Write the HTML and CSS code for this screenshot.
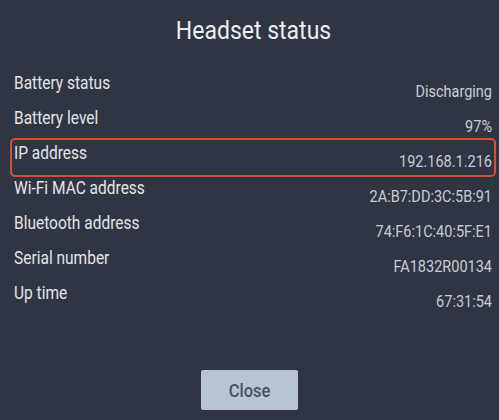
FILE: index.html
```html
<!DOCTYPE html>
<html lang="en">
<head>
<meta charset="utf-8">
<title>Headset status</title>
<link rel="stylesheet" href="styles.css">
</head>
<body>
<main class="dialog">
  <h1 class="title"><span class="stretch">Headset status</span></h1>
  <div class="list">
    <div class="row"><span class="label">Battery status</span><span class="value">Discharging</span></div>
    <div class="row"><span class="label">Battery level</span><span class="value">97%</span></div>
    <div class="row selected"><span class="label">IP address</span><span class="value">192.168.1.216</span></div>
    <div class="row"><span class="label">Wi-Fi MAC address</span><span class="value">2A:B7:DD:3C:5B:91</span></div>
    <div class="row"><span class="label">Bluetooth address</span><span class="value">74:F6:1C:40:5F:E1</span></div>
    <div class="row"><span class="label">Serial number</span><span class="value">FA1832R00134</span></div>
    <div class="row"><span class="label">Up time</span><span class="value">67:31:54</span></div>
  </div>
  <div class="footer">
    <button class="close" type="button"><span class="stretch">Close</span></button>
  </div>
</main>
</body>
</html>
```
FILE: styles.css
```css
html, body {
  margin: 0;
  padding: 0;
  background: #2f3542;
}
body {
  width: 499px;
  height: 420px;
  overflow: hidden;
  font-family: Roboto, "Noto Sans", sans-serif;
}
.dialog {
  display: flex;
  flex-direction: column;
  padding-top: 16px;
}
.title {
  margin: 0 0 0 8px;
  text-align: center;
  font-size: 23px;
  line-height: 30px;
  font-weight: 400;
  color: #eceef1;
}
.stretch {
  display: inline-block;
  transform: scaleY(1.16);
}
.list {
  margin-top: 24px;
  display: flex;
  flex-direction: column;
}
.row {
  display: flex;
  justify-content: space-between;
  align-items: flex-start;
  height: 35px;
  box-sizing: border-box;
  margin: 0 5px 0 12px;
  padding: 4px 2px 0 2px;
  border-radius: 2px;
}
.row.selected {
  outline: 2px solid #d6502f;
  border-radius: 3px;
}
.label {
  display: inline-block;
  transform: scaleY(1.16);
  font-size: 15.5px;
  line-height: 18px;
  color: #e3e5e9;
}
.value {
  display: inline-block;
  transform: scaleY(1.16);
  margin-top: 9px;
  font-size: 14.5px;
  line-height: 18px;
  color: #c8ccd3;
}
.footer {
  display: flex;
  justify-content: center;
  padding-top: 55px;
}
.close {
  width: 97px;
  height: 40px;
  border: none;
  border-radius: 2px;
  background: #b8c3d4;
  color: #465062;
  font-family: Roboto, "Noto Sans", sans-serif;
  font-size: 16.5px;
  font-weight: 500;
  padding: 0;
}
```
